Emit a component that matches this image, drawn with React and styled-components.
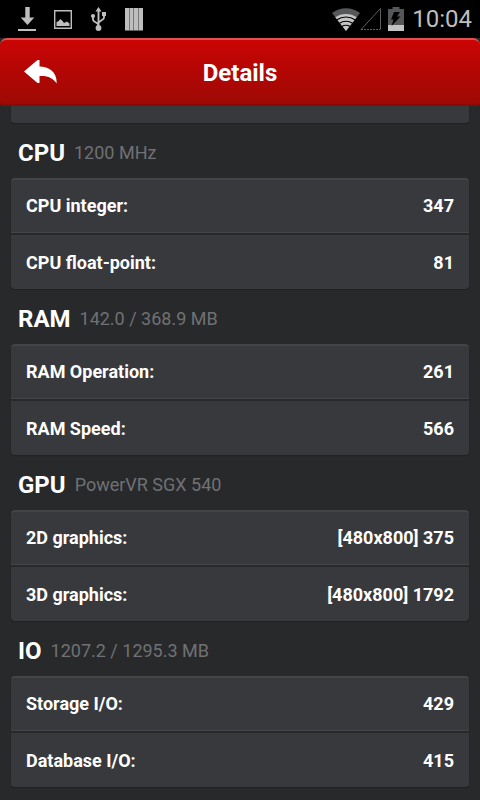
import * as React from 'react';
import styled, { createGlobalStyle } from 'styled-components';

const sections = [
  {
    title: 'CPU',
    info: '1200 MHz',
    rows: [
      { label: 'CPU integer:', value: '347' },
      { label: 'CPU float-point:', value: '81' },
    ],
  },
  {
    title: 'RAM',
    info: '142.0 / 368.9 MB',
    rows: [
      { label: 'RAM Operation:', value: '261' },
      { label: 'RAM Speed:', value: '566' },
    ],
  },
  {
    title: 'GPU',
    info: 'PowerVR SGX 540',
    rows: [
      { label: '2D graphics:', value: '[480x800] 375' },
      { label: '3D graphics:', value: '[480x800] 1792' },
    ],
  },
  {
    title: 'IO',
    info: '1207.2 / 1295.3 MB',
    rows: [
      { label: 'Storage I/O:', value: '429' },
      { label: 'Database I/O:', value: '415' },
    ],
  },
];

function DownloadIcon() {
  return (
    <svg width="18" height="24" viewBox="0 0 18 24" fill="#bebebe">
      <path d="M7.300 0h4.400v10.500h4.600L9.500 18 2.700 10.500h4.600z" />
      <path d="M0 22h18v2H0z" />
    </svg>
  );
}

function PictureIcon() {
  return (
    <svg width="18" height="19" viewBox="0 0 18 19">
      <path d="M.7.7h16.600v17.600H.7z" fill="none" stroke="#bebebe" strokeWidth="1.400" />
      <path d="M2.500 16v-4l1.500-.5L6.500 9 9 11.500l1 1.500 3-1.500 2.500 2V16z" fill="#bebebe" />
    </svg>
  );
}

function UsbIcon() {
  return (
    <svg width="17" height="24" viewBox="0 0 17 24" fill="#bebebe">
      <path d="M8.500 0l3 4.500h-6z" />
      <path d="M8.500 4v17M3 9v3.500c0 3 5.500 2.500 5.500 6M14 7v3.500c0 3-5.500 3-5.500 6" fill="none" stroke="#bebebe" strokeWidth="1.900" />
      <circle cx="3" cy="9" r="2.100" />
      <path d="M12 5h4v4h-4z" />
      <circle cx="8.500" cy="21" r="2.900" />
    </svg>
  );
}

function BarsIcon() {
  return (
    <svg width="18" height="23" viewBox="0 0 18 23">
      <path d="M0 0h18v22l-1 1-1-1-1 1-1-1-1 1-1-1-1 1-1-1-1 1-1-1-1 1-1-1-1 1-1-1-1 1-1-1-1 1-1-1z" fill="#bebebe" />
      <path d="M4.500 0v22M8.500 0v22M13.500 0v22" stroke="#777" strokeWidth="1" />
    </svg>
  );
}

function WifiIcon() {
  return (
    <svg width="28" height="23" viewBox="0 0 28 23">
      <path d="M14 23L0 5C8-1.500 20-1.500 28 5z" fill="#555759" />
      <path d="M14 23L3.300 9.300C9 4.800 19 4.800 24.700 9.300z" fill="#c4c4c4" />
      <path d="M5 11.800C10 8 18 8 23 11.800M7.500 15.300C11 12.500 17 12.500 20.500 15.300M10 18.500C12 16.800 16 16.800 18 18.500" fill="none" stroke="#000" strokeWidth="1.100" />
    </svg>
  );
}

function SignalIcon() {
  return (
    <svg width="22" height="24" viewBox="0 0 22 24" fill="none" stroke="#5c5e60" strokeWidth="1">
      <path d="M1 22.500L20.500 1.500v21" />
      <path d="M1 22.500h19" strokeDasharray="2 1" />
    </svg>
  );
}

function BatteryIcon() {
  return (
    <svg width="16" height="24" viewBox="0 0 16 24">
      <path d="M4.500 0h7v2H16v16H0V2h4.500z" fill="#555759" />
      <path d="M0 18h16v6H0z" fill="#c4c4c4" />
      <path d="M6 5h6L9 9.500h3.500L3.500 19l2-6.500H3z" fill="#000" />
    </svg>
  );
}

function BackIcon() {
  return (
    <svg width="33" height="24" viewBox="0 0 33 24">
      <path d="M0 11.500L13.500 0h2v6.500c9 0 17.500 5 17.200 17C29 18 24 15.500 15.500 16v7h-2z" fill="#fff" />
    </svg>
  );
}

function Section({ title, info, rows }) {
  return (
    <section>
      <Heading>
        <h2>{title}</h2>
        <span>{info}</span>
      </Heading>
      <Panel aria-label={title}>
        <tbody>
          {rows.map((row) => (
            <tr key={row.label}>
              <th scope="row">{row.label}</th>
              <td>{row.value}</td>
            </tr>
          ))}
        </tbody>
      </Panel>
    </section>
  );
}

function App() {
  return (
    <Screen>
      <GlobalStyle />
      <StatusBar>
        <Notifications>
          <DownloadIcon />
          <PictureIcon />
          <UsbIcon />
          <BarsIcon />
        </Notifications>
        <Indicators>
          <WifiIcon />
          <SignalIcon />
          <BatteryIcon />
          <Clock>10:04</Clock>
        </Indicators>
      </StatusBar>
      <Header>
        <BackButton type="button" aria-label="Back"><BackIcon /></BackButton>
        <h1>Details</h1>
      </Header>
      <Content>
        <PanelEnd />
        {sections.map((section) => (
          <Section key={section.title} {...section} />
        ))}
      </Content>
    </Screen>
  );
}

const GlobalStyle = createGlobalStyle`
  *{
    box-sizing:border-box;
  }
  body{
    margin:0;
    background-color:#28292b;
    color:#fff;
    font-family:Roboto, sans-serif;
  }
  h1, h2{
    margin:0;
  }
  svg{
    display:block;
    flex:none;
  }
`;

const Screen = styled.div`
  min-height:100vh;
`;

const StatusBar = styled.div`
  display:flex;
  justify-content:space-between;
  height:38px;
  padding:0 8px 0 18px;
  background-color:#000;
`;

const Notifications = styled.div`
  display:flex;
  align-items:center;
  gap:18px;
`;

const Indicators = styled.div`
  display:flex;
  align-items:center;
  svg:nth-of-type(3){
    margin:0 8px 0 6px;
  }
`;

const Clock = styled.span`
  color:#bebebe;
  font-size:24px;
  line-height:40px;
`;

const Header = styled.header`
  display:grid;
  grid-template-columns:80px 1fr 80px;
  align-items:center;
  height:68px;
  border-top:2px solid #e05050;
  border-bottom:2px solid #8c0a06;
  border-radius:7px 7px 3px 3px;
  background-image:linear-gradient(#cb0504, #bb0604 30%, #9e0904);
  h1{
    padding-top:2px;
    text-align:center;
    font-size:24px;
    font-weight:700;
    line-height:28px;
  }
`;

const BackButton = styled.button`
  display:flex;
  align-items:center;
  align-self:stretch;
  padding:0 0 0 24px;
  border:none;
  background:none;
  cursor:pointer;
`;

const Content = styled.main`
  padding:0 11px 13px;
`;

const PanelEnd = styled.div`
  height:17px;
  border-radius:0 0 4px 4px;
  background-color:#38393c;
  box-shadow:0 1px 1px #202123;
`;

const Heading = styled.div`
  display:flex;
  align-items:center;
  gap:9px;
  height:55px;
  padding:5px 7px 0;
  h2{
    font-size:24px;
    font-weight:700;
    line-height:28px;
  }
  span{
    color:#707174;
    font-size:18px;
    line-height:28px;
  }
`;

const Panel = styled.table`
  width:100%;
  border-spacing:0;
  border-top:2px solid #444547;
  border-radius:4px;
  background-color:#38393c;
  box-shadow:0 1px 1px #202123;
  font-size:18px;
  line-height:22px;
  th, td{
    padding:15px;
    font-weight:700;
  }
  th{
    text-align:left;
  }
  td{
    text-align:right;
  }
  tr:first-child th, tr:first-child td{
    border-bottom:1px solid #444547;
  }
  tr + tr th, tr + tr td{
    padding-top:17px;
    border-top:2px solid #28292b;
  }
`;

export default App;
